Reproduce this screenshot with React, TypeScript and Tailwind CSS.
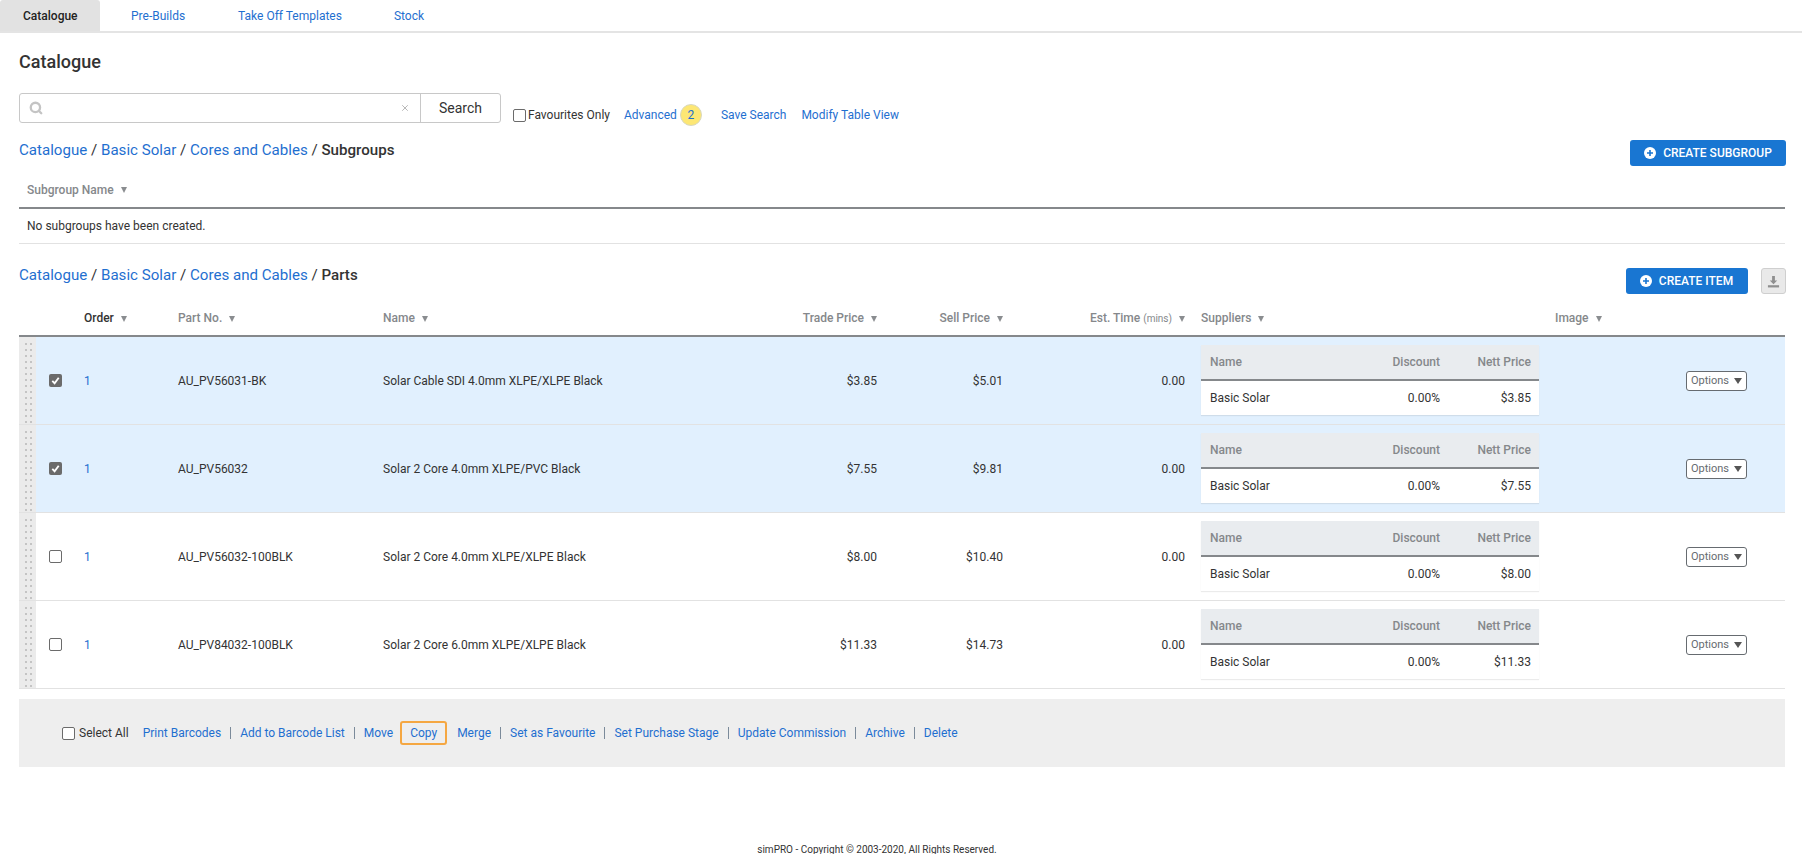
import { Search, X } from 'lucide-react';

type Part = { no: string; name: string; trade: string; sell: string; checked: boolean };

const parts: Part[] = [
  { no: 'AU_PV56031-BK', name: 'Solar Cable SDI 4.0mm XLPE/XLPE Black', trade: '$3.85', sell: '$5.01', checked: true },
  { no: 'AU_PV56032', name: 'Solar 2 Core 4.0mm XLPE/PVC Black', trade: '$7.55', sell: '$9.81', checked: true },
  { no: 'AU_PV56032-100BLK', name: 'Solar 2 Core 4.0mm XLPE/XLPE Black', trade: '$8.00', sell: '$10.40', checked: false },
  { no: 'AU_PV84032-100BLK', name: 'Solar 2 Core 6.0mm XLPE/XLPE Black', trade: '$11.33', sell: '$14.73', checked: false },
];

const rowGrid = 'grid grid-cols-[17px_48px_94px_205px_394px_100px_126px_182px_370px_131px_99px]';

function Caret({ className = 'ml-[7px] border-x-[3.5px] border-t-[6px] border-t-[#8a8d90]' }: { className?: string }) {
  return <span className={`inline-block align-middle w-0 h-0 border-x-transparent ${className}`} />;
}

function Check({ checked = false }: { checked?: boolean }) {
  if (checked) {
    return (
      <span className="flex items-center justify-center w-[13px] h-[13px] rounded-[2px] bg-[#6b6b6b]">
        <svg viewBox="0 0 12 12" className="w-[11px] h-[11px]" fill="none" stroke="#fff" strokeWidth="2">
          <path d="M2.5 6.5 5 9l4.5-6" />
        </svg>
      </span>
    );
  }
  return <span className="block w-[13px] h-[13px] rounded-[2px] border border-[#6b6b6b] bg-white" />;
}

function PlusCircle() {
  return (
    <svg viewBox="0 0 12 12" className="w-[12px] h-[12px] mr-[7px] -mt-[1px]">
      <circle cx="6" cy="6" r="6" fill="#fff" />
      <path d="M6 3v6M3 6h6" stroke="#1976d2" strokeWidth="1.6" />
    </svg>
  );
}

function Crumbs({ last }: { last: string }) {
  return (
    <div className="text-[15.1px] leading-[20px] text-[#333]">
      <a className="text-[#1f6fd0]">Catalogue</a> / <a className="text-[#1f6fd0]">Basic Solar</a> /{' '}
      <a className="text-[#1f6fd0]">Cores and Cables</a> / <span className="font-medium">{last}</span>
    </div>
  );
}

function DragHandle({ id }: { id: string }) {
  return (
    <svg className="block w-[17px] h-[87px] bg-[#ebebeb]" aria-hidden="true">
      <defs>
        <pattern id={id} width="5" height="6" patternUnits="userSpaceOnUse">
          <rect x="1" y="0" width="2" height="2" fill="#c4c4c4" />
        </pattern>
      </defs>
      <rect x="5" y="2" width="10" height="85" fill={`url(#${id})`} />
    </svg>
  );
}

function Suppliers({ trade }: { trade: string }) {
  return (
    <div className="self-start mt-[8px] ml-[16px] w-[338px] text-[12px] shadow-[0_1px_1px_rgba(0,0,0,0.08)]">
      <div className="grid grid-cols-[1fr_80px_91px] items-center h-[36px] pl-[9px] pr-[8px] bg-[#e9ecef] border-b-2 border-[#85888b] font-medium text-[#85888b]">
        <span>Name</span>
        <span className="text-right">Discount</span>
        <span className="text-right">Nett Price</span>
      </div>
      <div className="grid grid-cols-[1fr_80px_91px] items-center h-[34px] pl-[9px] pr-[8px] bg-white text-[#333]">
        <span>Basic Solar</span>
        <span className="text-right">0.00%</span>
        <span className="text-right">{trade}</span>
      </div>
    </div>
  );
}

function PartRow({ part }: { part: Part }) {
  return (
    <div className={`${rowGrid} grid-rows-[87px] items-center border-b border-[#e2e2e2] text-[12px] text-[#333] ${part.checked ? 'bg-[#e1f0fe]' : 'bg-white'}`}>
      <DragHandle id={`grip-${part.no}`} />
      <div className="pl-[13px]"><Check checked={part.checked} /></div>
      <a className="text-[#1f6fd0]">1</a>
      <div>{part.no}</div>
      <div>{part.name}</div>
      <div className="text-right">{part.trade}</div>
      <div className="text-right">{part.sell}</div>
      <div className="text-right">0.00</div>
      <Suppliers trade={part.trade} />
      <div />
      <div>
        <button className="flex items-center justify-center w-[61px] h-[20px] pt-[1px] rounded-[3px] border border-[#666b70] bg-white text-[11px] text-[#666b70]">
          Options<Caret className="ml-[5px] border-x-[4px] border-t-[6px] border-t-[#555]" />
        </button>
      </div>
    </div>
  );
}

function Sep() {
  return <span className="w-px h-[12px] bg-[#7b8a9a]" />;
}

const actionsBefore = ['Print Barcodes', 'Add to Barcode List', 'Move'];
const actionsAfter = ['Set as Favourite', 'Set Purchase Stage', 'Update Commission', 'Archive', 'Delete'];

export default function App() {
  return (
    <div className="min-h-screen bg-white font-['Roboto',sans-serif] text-[12px] text-[#333]">
      <div className="flex h-[33px] border-b-2 border-[#e4e4e4]">
        <div className="flex items-center w-[100px] h-[31px] pl-[23px] bg-[#e2e2e2] rounded-t-[3px] font-medium text-[#222]">Catalogue</div>
        <a className="flex items-center ml-[31px] text-[#1f6fd0]">Pre-Builds</a>
        <a className="flex items-center ml-[53px] text-[#1f6fd0]">Take Off Templates</a>
        <a className="flex items-center ml-[52px] text-[#1f6fd0]">Stock</a>
      </div>

      <div className="pl-[19px] pr-[17px]">
        <h1 className="pt-[18px] text-[18px] leading-[22px] font-medium text-[#333]">Catalogue</h1>

        <div className="flex items-start mt-[20px]">
          <div className="flex w-[482px] h-[30px] border border-[#c8c8c8] rounded-[3px]">
            <div className="flex items-center flex-1 pl-[9px] pr-[10px]">
              <Search size={14} strokeWidth={4} className="text-[#c4c4c4]" />
              <X size={10} className="ml-auto text-[#aaa]" />
            </div>
            <button className="w-[80px] border-l border-[#c8c8c8] text-[14px] text-[#333]">Search</button>
          </div>
          <label className="flex items-center h-[22px] mt-[11px] ml-[12px]">
            <Check />
            <span className="ml-[2px]">Favourites Only</span>
          </label>
          <a className="flex items-center h-[22px] mt-[11px] ml-[14px] text-[#1f6fd0]">Advanced</a>
          <span className="flex items-center justify-center w-[22px] h-[22px] mt-[11px] ml-[3px] rounded-full bg-[#fde774] border border-[#d8d8c0] text-[#1f6fd0]">2</span>
          <a className="flex items-center h-[22px] mt-[11px] ml-[19px] text-[#1f6fd0]">Save Search</a>
          <a className="flex items-center h-[22px] mt-[11px] ml-[15px] text-[#1f6fd0]">Modify Table View</a>
        </div>

        <div className="flex items-start justify-between mt-[14px]">
          <Crumbs last="Subgroups" />
          <button className="flex items-center justify-center w-[156px] h-[26px] -mr-[1px] rounded-[3px] bg-[#1976d2] text-white font-medium">
            <PlusCircle />
            CREATE SUBGROUP
          </button>
        </div>

        <div className="flex items-center h-[43px] pt-[7px] pl-[8px] border-b-2 border-[#85888b] font-medium text-[#85888b]">
          Subgroup Name<Caret />
        </div>
        <div className="flex items-center h-[35px] pl-[8px] border-b border-[#e2e2e2]">No subgroups have been created.</div>

        <div className="flex items-start justify-between mt-[21px]">
          <Crumbs last="Parts" />
          <div className="flex -mr-[1px] mt-[3px]">
            <button className="flex items-center justify-center w-[122px] h-[26px] pr-[1px] rounded-[3px] bg-[#1976d2] text-white font-medium">
              <PlusCircle />
              CREATE ITEM
            </button>
            <button className="flex items-center justify-center w-[25px] h-[26px] ml-[13px] rounded-[3px] border border-[#cfcfcf] bg-[#e9e9e9]">
              <svg viewBox="0 0 14 14" className="w-[13px] h-[13px]" fill="#8f8f8f">
                <path d="M5.5 1h3v5h2.5L7 10 3 6h2.5z" />
                <rect x="1" y="11" width="12" height="2.4" />
              </svg>
            </button>
          </div>
        </div>

        <div className={`${rowGrid} items-center h-[43px] pt-[7px] border-b-2 border-[#85888b] font-medium text-[#85888b]`}>
          <div />
          <div />
          <div className="text-[#333]">Order<Caret /></div>
          <div>Part No.<Caret /></div>
          <div>Name<Caret /></div>
          <div className="text-right">Trade Price<Caret /></div>
          <div className="text-right">Sell Price<Caret /></div>
          <div className="text-right">Est. Time <span className="text-[10px] font-normal">(mins)</span><Caret /></div>
          <div className="pl-[16px]">Suppliers<Caret /></div>
          <div>Image<Caret /></div>
          <div />
        </div>

        {parts.map(part => <PartRow key={part.no} part={part} />)}

        <div className="flex items-center gap-[9px] h-[68px] mt-[10px] pl-[43px] bg-[#eeeeee] text-[#1f6fd0]">
          <label className="flex items-center mr-[5px] text-[#333]">
            <Check />
            <span className="ml-[4px]">Select All</span>
          </label>
          {actionsBefore.map(action => (
            <span key={action} className="flex items-center gap-[9px]">
              <a>{action}</a>
              {action !== 'Move' && <Sep />}
            </span>
          ))}
          <button className="w-[47px] h-[24px] -ml-[2px] rounded-[3px] border-2 border-[#f5a742]">Copy</button>
          <a className="ml-[1px]">Merge</a>
          <Sep />
          {actionsAfter.map(action => (
            <span key={action} className="flex items-center gap-[9px]">
              <a>{action}</a>
              {action !== 'Delete' && <Sep />}
            </span>
          ))}
        </div>

        <div className="mt-[77px] pr-[50px] pb-[2px] text-center text-[10px] leading-[12px] text-[#333]">simPRO - Copyright © 2003-2020, All Rights Reserved.</div>
      </div>
    </div>
  );
}
